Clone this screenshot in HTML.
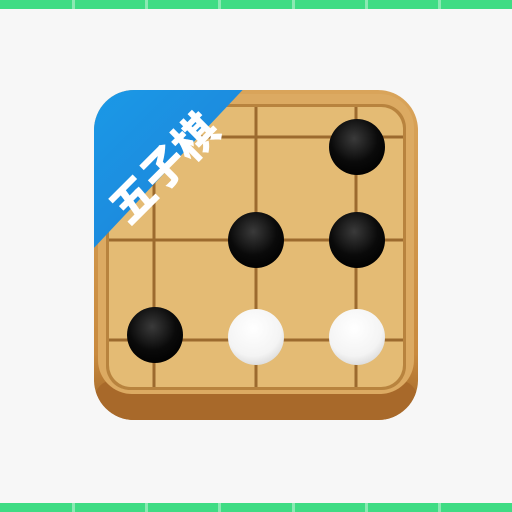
<!DOCTYPE html>
<html><head><meta charset="utf-8"><style>
html,body{margin:0;padding:0;background:#f7f7f7;width:512px;height:512px;overflow:hidden}
.bar{position:absolute;left:0;width:512px;height:9px;background:#3fdc84}
.d{position:absolute;width:3px;height:9px;background:#8be9b3}
</style></head><body>
<div class="bar" style="top:0"></div>
<div class="bar" style="top:503px"></div>
<svg width="512" height="512" style="position:absolute;left:0;top:0">
<defs>
<linearGradient id="fr" x1="0" y1="0" x2="0" y2="1">
<stop offset="0" stop-color="#d9a45a"/><stop offset="0.8" stop-color="#c98a3e"/><stop offset="1" stop-color="#9c6326"/></linearGradient>
<radialGradient id="bk" cx="0.45" cy="0.35" r="0.7"><stop offset="0" stop-color="#3a3a3a"/><stop offset="0.6" stop-color="#0a0a0a"/><stop offset="1" stop-color="#000"/></radialGradient>
<radialGradient id="wh" cx="0.45" cy="0.35" r="0.7"><stop offset="0" stop-color="#fff"/><stop offset="0.7" stop-color="#f4f4f4"/><stop offset="1" stop-color="#d8d8d8"/></radialGradient>
<linearGradient id="bl" x1="0" y1="0" x2="1" y2="1"><stop offset="0" stop-color="#1a9be8"/><stop offset="1" stop-color="#1e7fd6"/></linearGradient>
<clipPath id="cp"><rect x="94" y="90" width="324" height="330" rx="40"/></clipPath>
</defs>
<g fill="#8be9b3"><rect x="72" y="0" width="3" height="9"/><rect x="145" y="0" width="3" height="9"/><rect x="218" y="0" width="3" height="9"/><rect x="292" y="0" width="3" height="9"/><rect x="365" y="0" width="3" height="9"/><rect x="438" y="0" width="3" height="9"/>
<rect x="72" y="503" width="3" height="9"/><rect x="145" y="503" width="3" height="9"/><rect x="218" y="503" width="3" height="9"/><rect x="292" y="503" width="3" height="9"/><rect x="365" y="503" width="3" height="9"/><rect x="438" y="503" width="3" height="9"/></g>
<rect x="94" y="90" width="324" height="330" rx="40" fill="url(#fr)"/>
<rect x="94" y="380" width="324" height="40" rx="20" fill="#a8692a" clip-path="url(#cp)"/>
<rect x="98" y="94" width="316" height="300" rx="34" fill="#dcaa62"/>
<rect x="106" y="104" width="300" height="286" rx="24" fill="#b8833e"/>
<rect x="109" y="107" width="294" height="280" rx="22" fill="#e4bb74"/>
<g stroke="#9c6a2e" stroke-width="3">
<line x1="154" y1="107" x2="154" y2="387"/><line x1="256" y1="107" x2="256" y2="387"/><line x1="356" y1="107" x2="356" y2="387"/>
<line x1="109" y1="137" x2="403" y2="137"/><line x1="109" y1="240" x2="403" y2="240"/><line x1="109" y1="340" x2="403" y2="340"/>
</g>
<g clip-path="url(#cp)">
<polygon points="80,80 252,80 92,250 80,250" fill="url(#bl)"/>
</g>
<text x="0" y="0" transform="translate(162,166) rotate(-45)" font-family="'Noto Sans CJK SC',sans-serif" font-weight="900" font-size="44" fill="#fff" text-anchor="middle" dominant-baseline="central">五子棋</text>
<g>
<circle cx="357" cy="147" r="28" fill="url(#bk)"/>
<circle cx="256" cy="240" r="28" fill="url(#bk)"/>
<circle cx="357" cy="240" r="28" fill="url(#bk)"/>
<circle cx="155" cy="335" r="28" fill="url(#bk)"/>
<circle cx="256" cy="337" r="28" fill="url(#wh)"/>
<circle cx="357" cy="337" r="28" fill="url(#wh)"/>
</g>
</svg>
</body></html>
